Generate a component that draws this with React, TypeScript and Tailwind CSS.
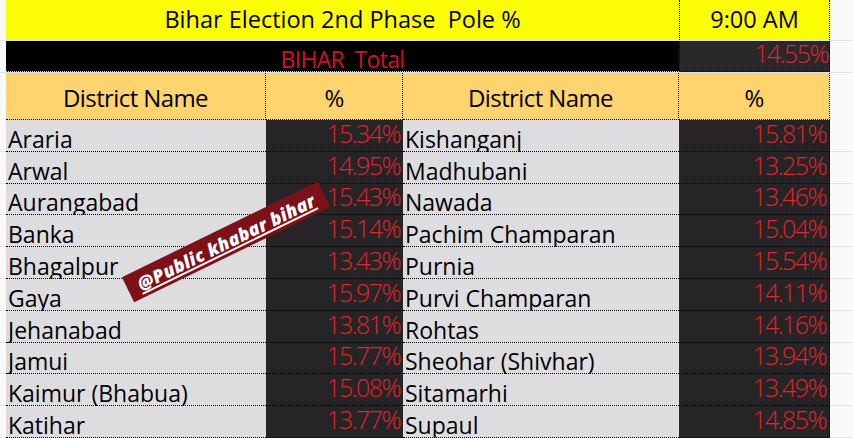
const left = [
    { name: 'Araria', pct: '15.34%' },
    { name: 'Arwal', pct: '14.95%' },
    { name: 'Aurangabad', pct: '15.43%' },
    { name: 'Banka', pct: '15.14%' },
    { name: 'Bhagalpur', pct: '13.43%' },
    { name: 'Gaya', pct: '15.97%' },
    { name: 'Jehanabad', pct: '13.81%' },
    { name: 'Jamui', pct: '15.77%' },
    { name: 'Kaimur (Bhabua)', pct: '15.08%' },
    { name: 'Katihar', pct: '13.77%' },
];

const right = [
    { name: 'Kishanganj', pct: '15.81%' },
    { name: 'Madhubani', pct: '13.25%' },
    { name: 'Nawada', pct: '13.46%' },
    { name: 'Pachim Champaran', pct: '15.04%' },
    { name: 'Purnia', pct: '15.54%' },
    { name: 'Purvi Champaran', pct: '14.11%' },
    { name: 'Rohtas', pct: '14.16%' },
    { name: 'Sheohar (Shivhar)', pct: '13.94%' },
    { name: 'Sitamarhi', pct: '13.49%' },
    { name: 'Supaul', pct: '14.85%' },
];

const NameCell = ({ text, w }: { text: string; w: string }) => (
    <div className={`${w} h-full flex items-end bg-[#dddcdf] border-b border-dotted border-black text-[23px] leading-none text-black whitespace-nowrap pl-[2px]`}>
        {text}
    </div>
);

const PctCell = ({ text, w }: { text: string; w: string }) => (
    <div className={`${w} h-full flex items-end justify-end bg-[#272427] border-b border-dotted border-black text-[25px] leading-none tracking-[-1.6px] font-light text-[#e0252a] pr-[3px] pb-[5px]`}>
        {text}
    </div>
);

export default function App() {
    return (
        <div className="relative w-[853px] h-[438px] overflow-hidden bg-[#fafafa] font-['Open_Sans',sans-serif]">
            {/* Title */}
            <div className="flex h-[41px] border-b border-[#e4e4e4]">
                <div className="w-[6px]"></div>
                <div className="w-[673px] flex items-center justify-center bg-[#fdfd06] text-[23.5px] leading-none text-black whitespace-pre">
                    Bihar Election 2nd Phase  Pole %
                </div>
                <div className="w-[151px] flex items-center justify-center bg-[#fdfd06] border-l border-r border-dotted border-black text-[23.5px] leading-none text-black">
                    9:00 AM
                </div>
            </div>

            {/* Total */}
            <div className="flex h-[32px] border-b border-[#e4e4e4]">
                <div className="w-[6px]"></div>
                <div className="w-[673px] flex items-end justify-center bg-black text-[23px] leading-none tracking-[-0.7px] text-[#d3121c] whitespace-pre border-b border-dotted border-[#ffd46e]">
                    BIHAR  Total
                </div>
                <div className="w-[151px] flex items-end justify-end bg-[#2a282b] border-l border-r border-b border-dotted border-black text-[25px] leading-none tracking-[-1.6px] font-light text-[#e0252a] pr-[1px] pb-[5px]">
                    14.55%
                </div>
            </div>

            {/* Header */}
            <div className="flex h-[47px]">
                <div className="w-[6px]"></div>
                {[['w-[260px]', 'District Name'], ['w-[137px]', '%'], ['w-[276px]', 'District Name'], ['w-[151px]', '%']].map(([w, t], i) => (
                    <div key={i} className={`${w} h-full flex items-end justify-center pb-[9px] bg-[#ffd46e] border-b border-r border-dotted border-black text-[24px] leading-none tracking-[-0.6px] text-black`}>
                        {t}
                    </div>
                ))}
            </div>

            {/* Rows */}
            {left.map((l, i) => (
                <div key={l.name} className="flex h-[31.8px]">
                    <div className="w-[6px] h-full border-b border-[#e4e4e4]"></div>
                    <NameCell text={l.name} w="w-[260px]" />
                    <PctCell text={l.pct} w="w-[137px]" />
                    <NameCell text={right[i].name} w="w-[276px]" />
                    <PctCell text={right[i].pct} w="w-[151px] border-r" />
                    <div className="flex-1 h-full border-b border-[#e4e4e4]"></div>
                </div>
            ))}

            {/* Watermark */}
            <div className="absolute left-[117px] top-[228px] w-[218px] h-[28px] -rotate-[26deg] bg-[#7e1118] flex items-center justify-center">
                <span className="text-white text-[18px] font-extrabold italic leading-none tracking-[0.3px] underline underline-offset-2 decoration-2 whitespace-nowrap">
                    @Public khabar bihar
                </span>
            </div>
        </div>
    );
}
